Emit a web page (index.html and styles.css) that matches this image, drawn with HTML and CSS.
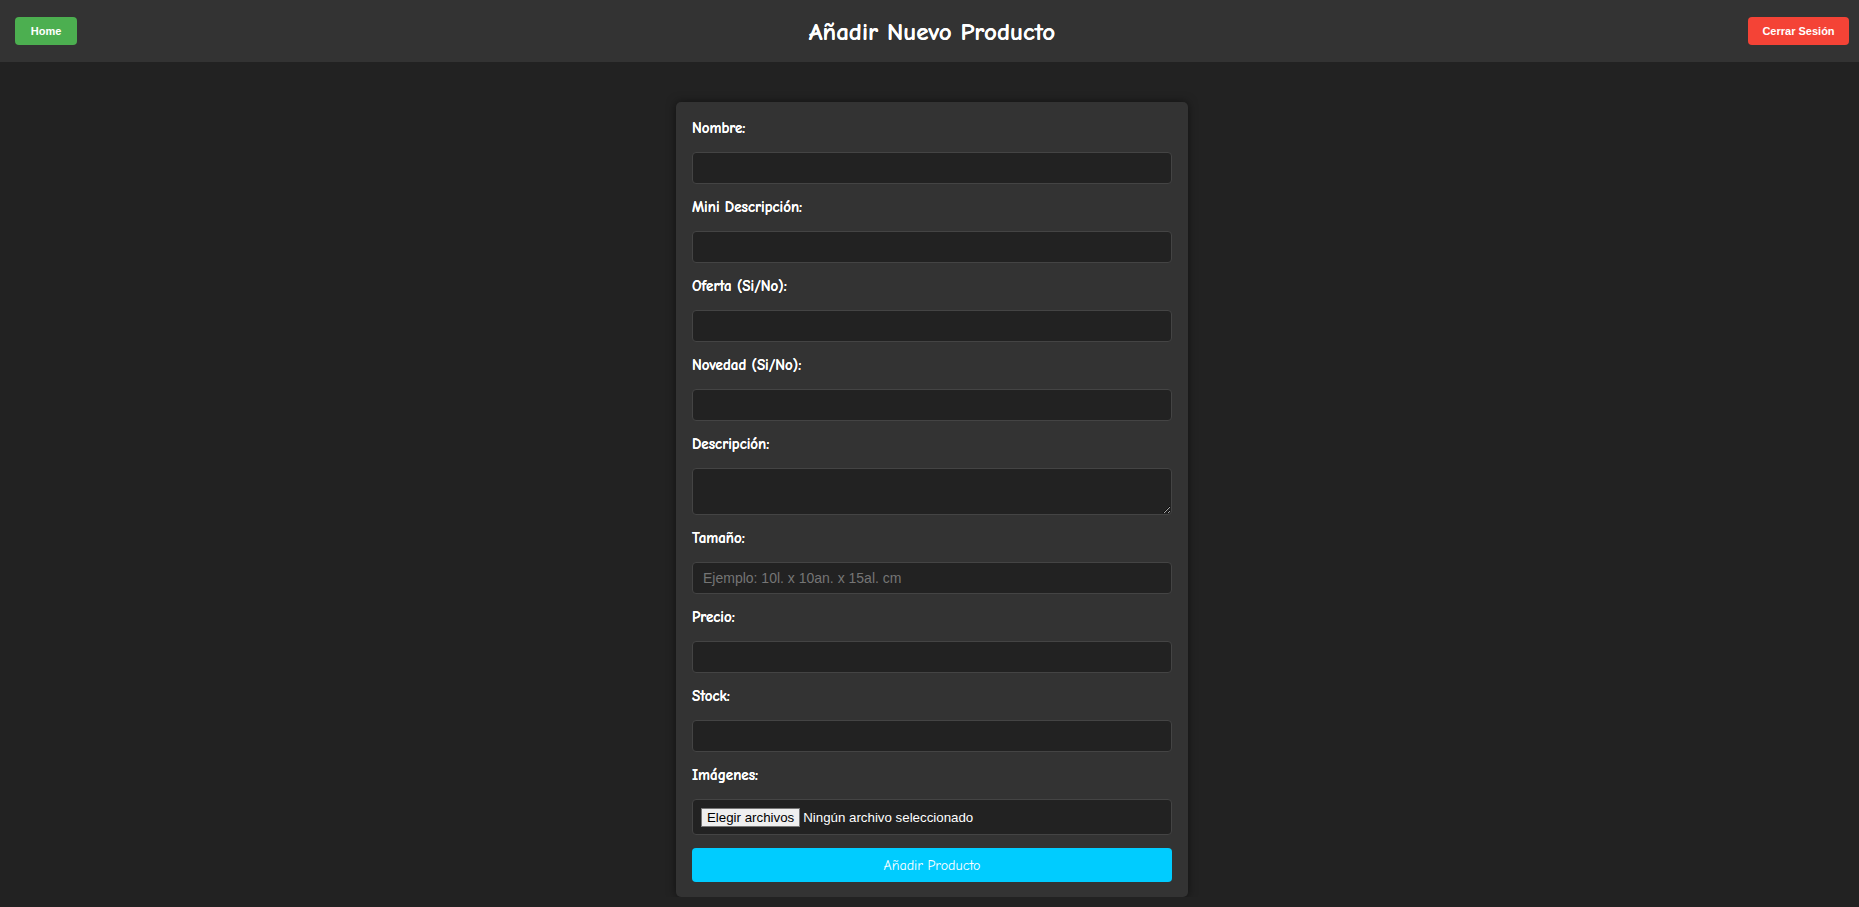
FILE: index.html
```html
<!DOCTYPE html>
<html lang="es">
<head>
<meta charset="utf-8">
<title>Añadir Nuevo Producto</title>
<link rel="stylesheet" href="styles.css">
</head>
<body>
<header class="topbar">
  <div class="side side-left"><button class="btn btn-home">Home</button></div>
  <h1 class="title">Añadir Nuevo Producto</h1>
  <div class="side side-right"><button class="btn btn-logout">Cerrar Sesión</button></div>
</header>
<main class="page">
  <form class="card">
    <label class="field-label">Nombre:</label>
    <input class="field" type="text">
    <label class="field-label">Mini Descripción:</label>
    <input class="field" type="text">
    <label class="field-label">Oferta (Si/No):</label>
    <input class="field" type="text">
    <label class="field-label">Novedad (Si/No):</label>
    <input class="field" type="text">
    <label class="field-label">Descripción:</label>
    <textarea class="field field-area"></textarea>
    <label class="field-label">Tamaño:</label>
    <input class="field" type="text" placeholder="Ejemplo: 10l. x 10an. x 15al. cm">
    <label class="field-label">Precio:</label>
    <input class="field" type="text">
    <label class="field-label">Stock:</label>
    <input class="field" type="text">
    <label class="field-label">Imágenes:</label>
    <div class="field field-file">
      <span class="file-btn">Elegir archivos</span>
      <span class="file-text">Ningún archivo seleccionado</span>
    </div>
    <button type="button" class="submit">Añadir Producto</button>
  </form>
</main>
</body>
</html>
```

FILE: styles.css
```css
html, body {
  margin: 0;
  padding: 0;
  background: #222222;
  color: #ffffff;
  font-family: "Comic Sans MS", "Comic Neue", "Noto Sans", sans-serif;
}

.topbar {
  height: 62px;
  background: #333333;
  display: grid;
  grid-template-columns: 1fr auto 1fr;
  align-items: center;
  padding: 0 10px 0 15px;
  box-sizing: border-box;
}

.side {
  display: flex;
  align-items: center;
}

.side-right {
  justify-content: flex-end;
}

.btn {
  height: 28px;
  border: none;
  border-radius: 4px;
  color: #ffffff;
  font-family: "Liberation Sans", Arial, sans-serif;
  font-weight: bold;
  font-size: 11px;
  padding: 0;
  cursor: pointer;
}

.btn-home {
  background: #4caf50;
  width: 62px;
}

.btn-logout {
  background: #f44336;
  width: 101px;
}

.title {
  margin: 0;
  font-size: 25px;
  font-weight: 700;
  color: #ffffff;
  text-shadow: 0 0 0.6px #ffffff;
}

.page {
  display: flex;
  justify-content: center;
  padding: 40px 0 0 5px;
}

.card {
  width: 512px;
  box-sizing: border-box;
  background: #333333;
  border-radius: 5px;
  padding: 16px 16px 15px;
  box-shadow: 0 0 10px rgba(0, 0, 0, 0.5);
  display: flex;
  flex-direction: column;
}

.field-label {
  display: block;
  height: 20px;
  line-height: 20px;
  font-size: 15px;
  font-weight: 700;
  margin-bottom: 14px;
  color: #ffffff;
  text-shadow: 0 0 0.5px #ffffff;
}

.field {
  display: block;
  box-sizing: border-box;
  width: 100%;
  height: 32px;
  margin: 0 0 13px;
  background: #222222;
  border: 1px solid #444444;
  border-radius: 4px;
  color: #ffffff;
  padding: 0 10px;
  font-family: "Liberation Sans", Arial, sans-serif;
  font-size: 14px;
}

.field::placeholder {
  color: #757575;
}

.field-area {
  height: 47px;
  resize: vertical;
  padding: 8px 10px;
}

.field-file {
  height: 36px;
  display: flex;
  align-items: center;
  padding: 0 8px;
  font-size: 13.3px;
}

.file-btn {
  display: inline-block;
  background: #efefef;
  color: #000000;
  border: 1px solid #767676;
  padding: 1px 5px;
  height: 19px;
  box-sizing: border-box;
  line-height: 16px;
  margin-right: 3px;
}

.file-text {
  color: #ffffff;
}

.submit {
  height: 34px;
  width: 100%;
  margin: 0;
  border: none;
  border-radius: 4px;
  background: #00ccff;
  color: #ffffff;
  font-family: "Comic Sans MS", "Comic Neue", "Noto Sans", sans-serif;
  font-size: 14px;
  cursor: pointer;
}
```
